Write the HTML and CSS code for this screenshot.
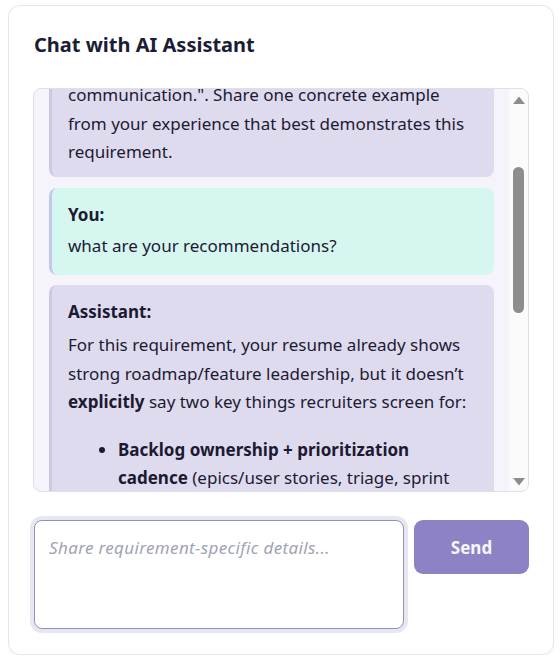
FILE: index.html
```html
<!DOCTYPE html>
<html lang="en">
<head>
<meta charset="utf-8">
<title>Chat with AI Assistant</title>
<link rel="stylesheet" href="styles.css">
</head>
<body>
<div class="card">
  <h2 class="title">Chat with AI Assistant</h2>
  <div class="chat-box">
    <div class="messages" id="messages">
      <div class="msg msg-assistant msg-intro" id="first-msg">
        <div class="who">Assistant:</div>
        <div class="body">
          <p>Let's work on this requirement: "Owns the product backlog, runs agile ceremonies, and keeps stakeholders aligned through clear and consistent<br>communication.". Share one concrete example from your experience that best demonstrates this requirement.</p>
        </div>
      </div>
      <div class="msg msg-user">
        <div class="who">You:</div>
        <div class="body"><p>what are your recommendations?</p></div>
      </div>
      <div class="msg msg-assistant">
        <div class="who">Assistant:</div>
        <div class="body">
          <p>For this requirement, your resume already shows strong roadmap/feature leadership, but it doesn’t <strong>explicitly</strong> say two key things recruiters screen for:</p>
          <ul>
            <li><strong>Backlog ownership + prioritization cadence</strong> (epics/user stories, triage, sprint planning) and how you decided what shipped next.</li>
            <li><strong>Stakeholder communication</strong> (weekly updates, demos, release notes) that kept engineering, design and leadership aligned.</li>
          </ul>
          <p><strong>Recommendation:</strong> add one bullet that names the backlog, the cadence and a measurable result.</p>
        </div>
      </div>
    </div>
    <div class="scrollbar" aria-hidden="true">
      <div class="sb-btn sb-up">
        <svg width="12" height="8" viewBox="0 0 12 8"><polygon points="0,8 6,0.5 12,8" fill="#8d8d8d"/></svg>
      </div>
      <div class="sb-track">
        <div class="sb-thumb" style="top: 59px; height: 146px;"></div>
      </div>
      <div class="sb-btn sb-down">
        <svg width="12" height="8" viewBox="0 0 12 8"><polygon points="0,0 12,0 6,7.5" fill="#8d8d8d"/></svg>
      </div>
    </div>
  </div>
  <div class="composer">
    <textarea class="input" placeholder="Share requirement-specific details..."></textarea>
    <button class="send" type="button">Send</button>
  </div>
</div>
<script src="script.js"></script>
</body>
</html>
```

FILE: styles.css
```css
html, body {
  background: #ffffff;
}
body {
  margin: 5px 6px 3px 8px;
  font-family: "Noto Sans", "Open Sans", sans-serif;
  color: #1c1a33;
}
.card {
  box-sizing: border-box;
  width: 546px;
  height: 650px;
  border: 1px solid #e3e6ef;
  border-radius: 12px;
  box-shadow: 0 1px 4px rgba(30, 40, 80, 0.06);
  padding: 24px 24px 25px 24px;
  display: flex;
  flex-direction: column;
}
.title {
  margin: 3px 0 31px 1px;
  font-size: 20px;
  line-height: 24px;
  font-weight: 700;
  color: #1a1d33;
}
.chat-box {
  box-sizing: border-box;
  height: 404px;
  flex: none;
  display: flex;
  border: 1px solid #dde0ec;
  border-radius: 8px;
  background: #f4f4fa;
  overflow: hidden;
}
.messages {
  position: relative;
  flex: 1;
  min-width: 0;
  overflow: hidden;
  padding: 15px;
}
.scrollbar {
  flex: none;
  width: 19px;
  background: #fbfbfb;
  display: flex;
  flex-direction: column;
}
.sb-btn {
  height: 19px;
  flex: none;
  display: flex;
  align-items: center;
  justify-content: center;
}
.sb-btn svg {
  display: block;
}
.sb-up svg {
  margin-top: 2px;
}
.sb-track {
  flex: 1;
  position: relative;
}
.sb-thumb {
  position: absolute;
  left: 4px;
  right: 4px;
  border-radius: 6px;
  background: #8d8d8d;
}
.msg {
  border-radius: 8px;
  border-left: 3px solid #ccc8e4;
  padding: 13px 16px;
  font-size: 17px;
  line-height: 28.5px;
}
.msg + .msg {
  margin-top: 10px;
}
.msg-intro {
  padding-bottom: 10px;
}
.msg-intro + .msg {
  margin-top: 11px;
}
.msg-assistant {
  background: #dfdbee;
  border-left-color: #cdc8e4;
}
.msg-user {
  background: #d6f7f0;
  border-left-color: #c3c9ea;
  padding-bottom: 14px;
}
.who {
  font-weight: 700;
}
.body {
  margin-top: 3px;
}
.msg-assistant .body {
  margin-top: 5px;
}
.body p {
  margin: 0;
}
.body p + p,
.body ul + p {
  margin-top: 16px;
}
.body ul {
  margin: 19px 0 0 0;
  padding-left: 50px;
}
.body li + li {
  margin-top: 4px;
}
.composer {
  margin-top: 28px;
  display: flex;
  align-items: flex-start;
  gap: 10px;
}
.input {
  flex: 1;
  box-sizing: border-box;
  height: 109px;
  margin: 0 0 0 1px;
  padding: 15px 14px 13px;
  border: 1px solid #8e96b8;
  border-radius: 8px;
  box-shadow: 0 0 0 4px #e6e7f0;
  font-family: "Noto Sans", "Open Sans", sans-serif;
  font-size: 17px;
  line-height: 24px;
  color: #1c1a33;
  resize: none;
  outline: none;
  background: #ffffff;
}
.input::placeholder {
  color: #a0a3b6;
  font-style: italic;
  letter-spacing: 0.35px;
}
.send {
  flex: none;
  width: 115px;
  height: 54px;
  border: none;
  border-radius: 9px;
  background: #8d82c4;
  color: #f7f5fc;
  font-family: "Noto Sans", "Open Sans", sans-serif;
  font-size: 17px;
  font-weight: 700;
  padding-top: 2px;
  cursor: pointer;
}
```

FILE: script.js
```js
var box = document.getElementById('messages');
var first = document.getElementById('first-msg');
box.scrollTop = first.offsetTop + first.offsetHeight - 88;
```
